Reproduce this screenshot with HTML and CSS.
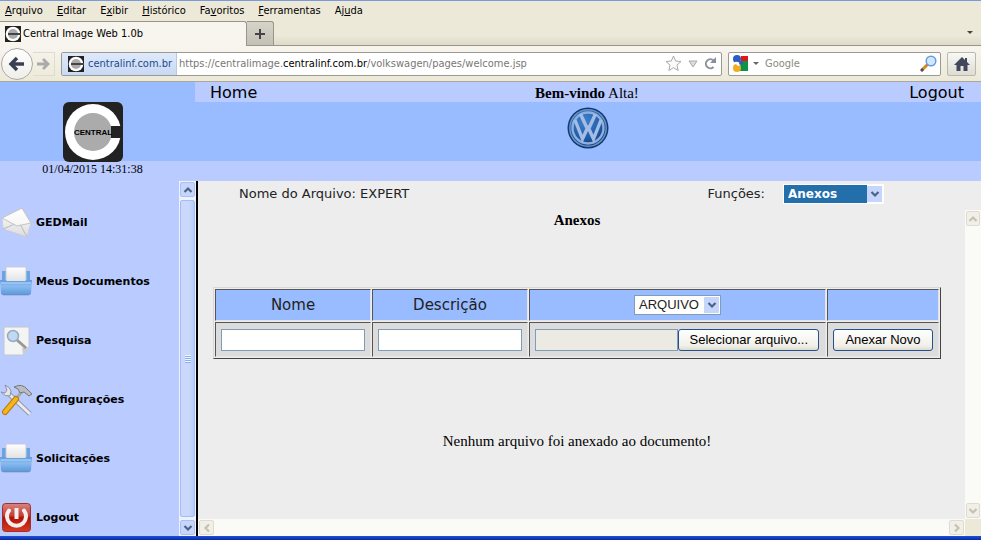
FILE: index.html
```html
<!DOCTYPE html>
<html lang="pt-BR">
<head>
<meta charset="utf-8">
<title>Central Image Web 1.0b</title>
<link rel="stylesheet" href="styles.css">
</head>
<body>
<svg class="defs" aria-hidden="true">
  <defs>
    <linearGradient id="paper" x1="0" y1="0" x2="0" y2="1"><stop offset="0" stop-color="#fff"/><stop offset="1" stop-color="#dcdcdc"/></linearGradient>
    <linearGradient id="tray" x1="0" y1="0" x2="0" y2="1"><stop offset="0" stop-color="#5d9add"/><stop offset=".4" stop-color="#8bbcf0"/><stop offset="1" stop-color="#5a97da"/></linearGradient>
    <linearGradient id="power" x1="0" y1="0" x2="0" y2="1"><stop offset="0" stop-color="#d98580"/><stop offset=".45" stop-color="#c23a30"/><stop offset=".5" stop-color="#b01208"/><stop offset="1" stop-color="#d83a20"/></linearGradient>
    <radialGradient id="badge" cx=".4" cy=".3" r=".8"><stop offset="0" stop-color="#3f83cc"/><stop offset=".6" stop-color="#205ca8"/><stop offset="1" stop-color="#0e3269"/></radialGradient>
    <symbol id="chevron" viewBox="0 0 10 10"><path d="M1.500 3 5 6.500 8.500 3" fill="none" stroke="currentColor" stroke-width="2.200"/></symbol>
    <symbol id="central" viewBox="0 0 60 60">
      <rect width="60" height="60" rx="6" fill="#222"/>
      <circle cx="30" cy="30" r="28" fill="#fff"/><circle cx="30" cy="30" r="19" fill="#ababab"/>
      <path d="M48 24h11v12H48z" fill="#222"/>
    </symbol>
    <symbol id="centralmini" viewBox="0 0 16 16">
      <path d="M0 0h16v16H0z" fill="#222"/>
      <circle cx="8" cy="8" r="7.300" fill="#fff"/><circle cx="8" cy="8" r="5" fill="#aaa"/>
      <path d="M3 7h13v2H3z" fill="#444"/>
    </symbol>
    <symbol id="trayicon" viewBox="0 0 32 32">
      <path d="M2 5h5v12H2zM25 5h5v12h-5z" fill="#6ba2e0"/>
      <path d="M6 1h20v17H6z" fill="url(#paper)" stroke="#c3cbd8"/>
      <path d="M0 14h5l2 1h18l2-1h5l-1 13q0 2-2 2H3q-2 0-2-2z" fill="url(#tray)"/>
      <path d="M1 17h30" stroke="#b8dbff"/><path d="M3 29h26" stroke="#7783a8" opacity=".5"/>
    </symbol>
  </defs>
</svg>

<header class="browser">
  <nav class="menubar">
    <button><u>A</u>rquivo</button><button><u>E</u>ditar</button><button>E<u>x</u>ibir</button><button><u>H</u>istórico</button><button>Fa<u>v</u>oritos</button><button><u>F</u>erramentas</button><button>Aj<u>u</u>da</button>
  </nav>
  <div class="tabstrip">
    <button class="tab"><svg class="favicon"><use href="#centralmini"/></svg>Central Image Web 1.0b</button>
    <button class="newtab" aria-label="Nova aba"><svg width="12" height="12"><path d="M6 1v10M1 6h10" stroke="#444" stroke-width="2"/></svg></button>
    <button class="tablist" aria-label="Listar abas"><svg width="6" height="4"><path d="M0 0h6L3 3z" fill="#444"/></svg></button>
  </div>
  <div class="navbar">
    <button class="back" aria-label="Voltar"><svg width="18" height="16" viewBox="0 0 18 16"><path d="M16 8H4M9 2 3 8l6 6" fill="none" stroke="#3a4054" stroke-width="3.400"/></svg></button>
    <button class="forward" aria-label="Avançar"><svg width="14" height="14" viewBox="0 0 14 14"><path d="M0 7h10M6 2l5 5-5 5" fill="none" stroke="#aaa" stroke-width="2.800"/></svg></button>
    <div class="address">
      <span class="identity"><svg class="favicon"><use href="#centralmini"/></svg>centralinf.com.br</span>
      <div class="url" role="textbox" aria-label="Endereço">https://centralimage.<b>centralinf.com.br</b>/volkswagen/pages/welcome.jsp</div>
      <svg width="17" height="17" viewBox="0 0 17 17"><path d="m8.500 1 2.200 5 5.300.5-4 3.600 1.200 5.400-4.700-2.800-4.700 2.800L5 10.100 1 6.500 6.300 6z" fill="#fafafa" stroke="#aaa"/></svg>
      <svg width="10" height="8"><path d="M1 1h8L5 7z" fill="#ddd" stroke="#aaa"/></svg>
      <svg width="13" height="13" viewBox="0 0 13 13"><path d="M9.500 10A4.500 4.500 0 1 1 9.500 3.500" fill="none" stroke="#8a8f9c" stroke-width="2"/><path d="M12 0v6H6z" fill="#8a8f9c"/></svg>
    </div>
    <div class="search">
      <svg width="17" height="17" viewBox="0 0 17 17"><path d="M9 1h7v5H9z" fill="#e01515"/><path d="M8 6h8v10H8z" fill="#0b9444"/><circle cx="5" cy="4" r="4" fill="#2b5cc4"/><circle cx="5" cy="13" r="4" fill="#efad25"/><path d="M2 7q6-1 7 3l-3 1z" fill="#fff"/><circle cx="9" cy="8" r="2" fill="#2b5cc4"/></svg>
      <svg width="6" height="4"><path d="M0 0h6L3 3z" fill="#666"/></svg>
      <input aria-label="Pesquisar" placeholder="Google">
      <svg width="17" height="17" viewBox="0 0 17 17"><path d="m2 15 6-6" stroke="#d98422" stroke-width="3"/><path d="m1 16 2-2" stroke="#4a4a6a" stroke-width="3"/><circle cx="11" cy="6" r="4.800" fill="#cfe8ff" stroke="#6b9bdc" stroke-width="1.500"/></svg>
    </div>
    <button class="homebtn" aria-label="Início"><svg width="16" height="14" viewBox="0 0 16 14"><path d="M8 0 0 8h2.500v6H6.500V9h3v5h4V8H16l-3-3V1h-2v2z" fill="#42485c"/></svg></button>
  </div>
</header>

<div class="banner">
  <div class="brand">
    <div class="brandband"><svg class="logo" viewBox="0 0 60 60" role="img" aria-label="Central"><use href="#central"/><text x="30" y="33" class="logotext">CENTRAL</text></svg></div>
    <time>01/04/2015 14:31:38</time>
  </div>
  <div class="welcome">
    <div class="links"><a href="#">Home</a><span><b>Bem-vindo</b> Alta!</span><a href="#">Logout</a></div>
    <div class="band">
      <svg width="42" height="42" viewBox="0 0 42 42" role="img" aria-label="Volkswagen"><circle cx="21" cy="21" r="20.500" fill="#12396f"/><circle cx="21" cy="21" r="19" fill="#6893c8"/><circle cx="21" cy="21" r="17.500" fill="url(#badge)"/><circle cx="21" cy="21" r="15.500" fill="none" stroke="#8fafdf" stroke-width="2.400"/><path d="m13.500 7 6 13h3l6-13M8 13l7.500 19L20 22h2l4.500 10L34 13" fill="none" stroke="#a3bde6" stroke-width="3.400"/></svg>
    </div>
  </div>
</div>

<div class="frames">
  <nav class="side">
    <ul>
      <li><a href="#"><svg viewBox="0 0 32 32"><path d="M2 11 22 1l9 15-4 14L3 22z" fill="url(#paper)" stroke="#ccd"/><path d="m3 22 12-5M27 30l-7-13" fill="none" stroke="#bbb"/><path d="m2 11 15 8 14-3-9-15z" fill="#fff" fill-opacity=".6" stroke="#c4c4c4"/></svg>GEDMail</a></li>
      <li><a href="#"><svg><use href="#trayicon"/></svg>Meus Documentos</a></li>
      <li><a href="#"><svg viewBox="0 0 32 32"><path d="M4 2h25v20l-6 8H4z" fill="#f3f4f4" stroke="#c2c7cd"/><path d="m29 22-7 1 1 7z" fill="#ccc"/><path d="m17 15 9 8" stroke="#999" stroke-width="3"/><circle cx="13" cy="11" r="5.500" fill="#c0d9f4" stroke="#9aa9c0" stroke-width="1.500"/></svg>Pesquisa</a></li>
      <li><a href="#"><svg viewBox="0 0 32 32"><path d="m8 9 22 21" stroke="#929aa6" stroke-width="5"/><path d="m8 9 22 21" stroke="#e8eaee" stroke-width="3"/><path d="M5 1q5 2 6 6l-1 5q-5 1-9-4l4 1 2-3z" fill="#e4e6ea" stroke="#8d939e"/><path d="m16 15 7-9" stroke="#aaa" stroke-width="3"/><path d="M14 3q8-4 13 2l5 5-3 2-5-4-4 1-2-4z" fill="#b9bcc1" stroke="#777"/><path d="M5 28 16 15" stroke="#b97c0a" stroke-width="6" stroke-linecap="round"/><path d="M5 28 16 15" stroke="#f4b51d" stroke-width="4" stroke-linecap="round"/></svg>Configurações</a></li>
      <li><a href="#"><svg><use href="#trayicon"/></svg>Solicitações</a></li>
      <li><a href="#"><svg viewBox="0 0 32 32"><rect x="2.500" y="1.500" width="28" height="28" rx="3" fill="url(#power)" stroke="#a03030"/><path d="M9 8.500a9.500 9.500 0 1 0 15 0" fill="none" stroke="#f4eeee" stroke-width="4" stroke-linecap="round"/><path d="M16.500 6v11" stroke="#f4eeee" stroke-width="4"/></svg>Logout</a></li>
    </ul>
    <div class="vscroll">
      <button aria-label="Subir"><svg class="up"><use href="#chevron"/></svg></button>
      <div class="thumb"><i></i></div>
      <button aria-label="Descer"><svg><use href="#chevron"/></svg></button>
    </div>
  </nav>

  <main>
    <div class="toolbar">
      <span>Nome do Arquivo: EXPERT</span>
      <label for="func">Funções:</label>
      <span class="pick functions"><select id="func"><option>Anexos</option></select><span class="arrow"><svg><use href="#chevron"/></svg></span></span>
    </div>
    <div class="pane">
      <section class="content">
        <h1>Anexos</h1>
        <table>
          <colgroup><col class="c1"><col class="c1"><col class="c2"><col class="c3"></colgroup>
          <thead><tr><th id="hn">Nome</th><th id="hd">Descrição</th><th><span class="pick kind"><select aria-label="Tipo"><option>ARQUIVO</option></select><span class="arrow"><svg><use href="#chevron"/></svg></span></span></th><th></th></tr></thead>
          <tbody><tr><td><input aria-labelledby="hn"></td><td><input aria-labelledby="hd"></td><td><div class="file"><input aria-label="Arquivo" readonly><button class="push">Selecionar arquivo...</button></div></td><td><button class="push wide">Anexar Novo</button></td></tr></tbody>
        </table>
        <p>Nenhum arquivo foi anexado ao documento!</p>
      </section>
      <div class="vscroll off">
        <button disabled aria-label="Subir"><svg class="up"><use href="#chevron"/></svg></button>
        <div class="track"></div>
        <button disabled aria-label="Descer"><svg><use href="#chevron"/></svg></button>
      </div>
      <div class="hscroll off">
        <button disabled aria-label="Esquerda"><svg class="left"><use href="#chevron"/></svg></button>
        <button disabled aria-label="Direita"><svg class="right"><use href="#chevron"/></svg></button>
      </div>
      <div class="corner"></div>
    </div>
  </main>
</div>
<div class="taskbar"></div>
</body>
</html>
```
FILE: styles.css
```css
* { box-sizing: border-box; }
html, body { height: 100%; }
body {
  margin: 0;
  display: flex;
  flex-direction: column;
  overflow: hidden;
  background: #ededed;
  color: #000;
  font: 15px/18px "Liberation Serif", serif;
}
button, input, select { font: inherit; color: inherit; margin: 0; }
button { padding: 0; border: 0; background: none; }
a { color: inherit; text-decoration: none; }
svg { flex: none; display: block; }
.defs { position: absolute; width: 0; height: 0; }

/* Browser window */
.browser {
  background: #ece9d8;
  border-top: 1px solid #7b9ad8;
  border-bottom: 1px solid #aca899;
  font: 11px/14px "DejaVu Sans Condensed", "Noto Sans", sans-serif;
}
.menubar { display: flex; gap: 14px; height: 20px; padding: 0 5px; }
.tabstrip {
  display: flex;
  height: 25px;
  background: linear-gradient(#ece9d8 60%, #dedbcb);
  border-bottom: 1px solid #98968b;
}
.tab {
  display: flex;
  align-items: center;
  gap: 2px;
  width: 247px;
  height: 25px;
  padding: 1px 5px;
  background: #f7f5ee;
  border: 1px solid #98968b;
  border-width: 1px 1px 0 0;
  border-radius: 0 3px 0 0;
}
.favicon { width: 16px; height: 16px; }
.newtab {
  display: grid;
  place-items: center;
  width: 27px;
  background: linear-gradient(#d6d4c8, #c3c1b6);
  border: 1px solid #98968b;
  border-width: 1px 1px 0 0;
  border-radius: 0 3px 0 0;
}
.tablist { margin: 0 8px 0 auto; }
.navbar {
  display: flex;
  align-items: center;
  height: 35px;
  padding: 0 5px 0 1px;
  background: linear-gradient(#f7f5ee, #ece9d8);
}
.back {
  display: grid;
  place-items: center;
  width: 32px;
  height: 32px;
  border: 1px solid #aaa;
  border-radius: 50%;
  background: linear-gradient(#fff, #f0eee8);
}
.forward {
  display: grid;
  place-items: center;
  width: 22px;
  height: 24px;
  margin-right: 6px;
  border: 1px solid #dedbd0;
  border-left: 0;
}
.address, .search {
  display: flex;
  align-items: center;
  height: 24px;
  background: #fff;
  border: 1px solid #9a9a94;
  border-radius: 2px;
}
.address { flex: 1; gap: 6px; padding-right: 4px; color: #777; }
.address b { color: #000; font-weight: normal; }
.identity {
  display: flex;
  align-items: center;
  gap: 4px;
  height: 22px;
  padding: 0 4px 0 6px;
  background: linear-gradient(#dfe9fa, #c8d9f4);
  border-right: 1px solid #b7c9e8;
  color: #1d4a8c;
}
.url { flex: 1; margin-left: -4px; white-space: nowrap; overflow: hidden; }
.search { width: 213px; margin: 0 6px; padding: 0 3px; gap: 4px; }
.search input { flex: 1; min-width: 0; border: 0; padding: 0 2px; outline: 0; background: none; }
.search input::placeholder { color: #8c8b80; opacity: 1; }
.homebtn {
  display: grid;
  place-items: center;
  width: 29px;
  height: 24px;
  border: 1px solid #bbb8ac;
  border-radius: 2px;
  background: linear-gradient(#f8f8f6, #dedcd4);
}

/* Page banner */
.banner { display: flex; height: 99px; background: #b9cbff; }
.brand { width: 195px; padding-right: 10px; text-align: center; font-size: 12px; }
.brandband { height: 79px; padding: 20px 0 0 63px; background: #99bbff; margin-right: -10px; }
.logo { width: 60px; height: 60px; }
.logotext { font: bold 8px "Liberation Sans", sans-serif; text-anchor: middle; }
.brand time { display: block; line-height: 17px; }
.welcome { flex: 1; }
.links {
  display: grid;
  grid-template-columns: 1fr auto 1fr;
  height: 20px;
  padding: 0 17px 0 15px;
  line-height: 22px;
}
.links a { font-family: "DejaVu Sans", sans-serif; font-size: 16px; }
.links a:last-child { text-align: right; }
.band { display: flex; justify-content: center; height: 59px; padding-top: 5px; background: #99bbff; }

/* Side menu */
.frames { flex: 1; display: flex; min-height: 0; }
.side { display: flex; width: 198px; background: #b9cbff; border-right: 2px solid #000; }
.side ul {
  flex: 1;
  display: flex;
  flex-direction: column;
  gap: 27px;
  margin: 0;
  padding: 26px 0 0;
  list-style: none;
}
.side a {
  display: flex;
  align-items: center;
  gap: 4px;
  font: bold 11px/16px "DejaVu Sans", sans-serif;
}
.side a svg { width: 32px; height: 32px; }

/* Scrollbars */
.vscroll { display: flex; flex-direction: column; width: 17px; background: #f0f2fb; color: #4d6185; }
.vscroll button, .hscroll button {
  display: grid;
  place-items: center;
  width: 15px;
  height: 15px;
  margin: 1px;
  border: 1px solid #a9c0f0;
  border-radius: 2px;
  background: #c5d5fb;
}
.vscroll svg, .hscroll svg { width: 10px; height: 10px; }
.up { transform: rotate(180deg); }
.left { transform: rotate(90deg); }
.right { transform: rotate(-90deg); }
.thumb {
  flex: 1;
  display: grid;
  place-items: center;
  margin: 2px 1px;
  border: 1px solid #a3bdf5;
  border-radius: 2px;
  background: linear-gradient(90deg, #cbd8fb 60%, #b4cbfb);
}
.thumb i { width: 6px; height: 8px; background: repeating-linear-gradient(#eef4ff 0 1px, #8cb0f8 1px 2px); }
.off { background: #fafaf6; color: #c4c1b5; }
.off button { border-color: #dedcd0; background: #f1efe7; }
.track { flex: 1; }
.hscroll { display: flex; justify-content: space-between; }
.corner { background: #ece9d8; }

/* Work area */
main { flex: 1; display: flex; flex-direction: column; min-width: 0; }
.toolbar {
  display: flex;
  align-items: center;
  height: 29px;
  padding: 0 97px 3px 41px;
  font: 13px/16px "DejaVu Sans", sans-serif;
  color: #222;
}
.toolbar label { margin: 0 18px 0 auto; }
.pick { position: relative; display: inline-block; vertical-align: middle; }
.pick select {
  appearance: none;
  display: block;
  width: 100%;
  height: 20px;
  padding: 0 4px;
  border: 1px solid #7f9db9;
  border-radius: 0;
  background: #fff;
}
.arrow {
  position: absolute;
  top: 2px;
  right: 2px;
  bottom: 2px;
  width: 15px;
  display: grid;
  place-items: center;
  background: #c5d5fb;
  color: #4d6185;
  pointer-events: none;
}
.arrow svg { width: 10px; height: 10px; }
.functions { width: 101px; }
.functions select {
  border-color: #fff;
  font-weight: bold;
  font-size: 12px;
  color: #fff;
  background: linear-gradient(90deg, #226fac 83px, #fff 83px);
}
.pane { flex: 1; display: grid; grid-template: 1fr 17px / 1fr 16px; min-height: 0; }
.pane .vscroll { width: 16px; }
.pane .vscroll button { width: 14px; }
.content { padding: 1px 24px 0 15px; text-align: center; }
.content h1 { margin: 0 0 58px; font-size: 15px; line-height: 18px; }
.content p { margin: 73px 0 0; }
table {
  width: 100%;
  table-layout: fixed;
  border: 1px solid;
  border-color: #d8d8d8 #444 #444 #d8d8d8;
  border-spacing: 1px;
}
.c1 { width: 156px; }
.c3 { width: 112px; }
th, td {
  padding: 0 5px;
  border: 1px solid;
  border-color: #555 #e4e4e4 #e4e4e4 #555;
  background: #dcdcdc;
}
th { height: 32px; padding: 0; background: #99bbff; font: 15px/18px "DejaVu Sans", sans-serif; color: #222; }
td { height: 35px; }
.kind { width: 87px; font: 13px/16px "Liberation Sans", sans-serif; }
td input {
  display: block;
  width: 100%;
  min-width: 0;
  height: 22px;
  padding: 0 3px;
  border: 1px solid #7f9db9;
}
.file { display: flex; padding-right: 1px; }
.file input { flex: 1; background: #ebebe4; }
.push {
  height: 22px;
  padding: 0 10px;
  border: 1px solid #26508a;
  border-radius: 3px;
  background: linear-gradient(#fff, #f0efe8 80%, #dedbd0);
  font: 13px/18px "Liberation Sans", sans-serif;
  white-space: nowrap;
}
.wide { display: block; width: 100%; padding: 0; }
.taskbar { height: 4px; background: linear-gradient(#1c50e0, #0a2a9c); }
```
